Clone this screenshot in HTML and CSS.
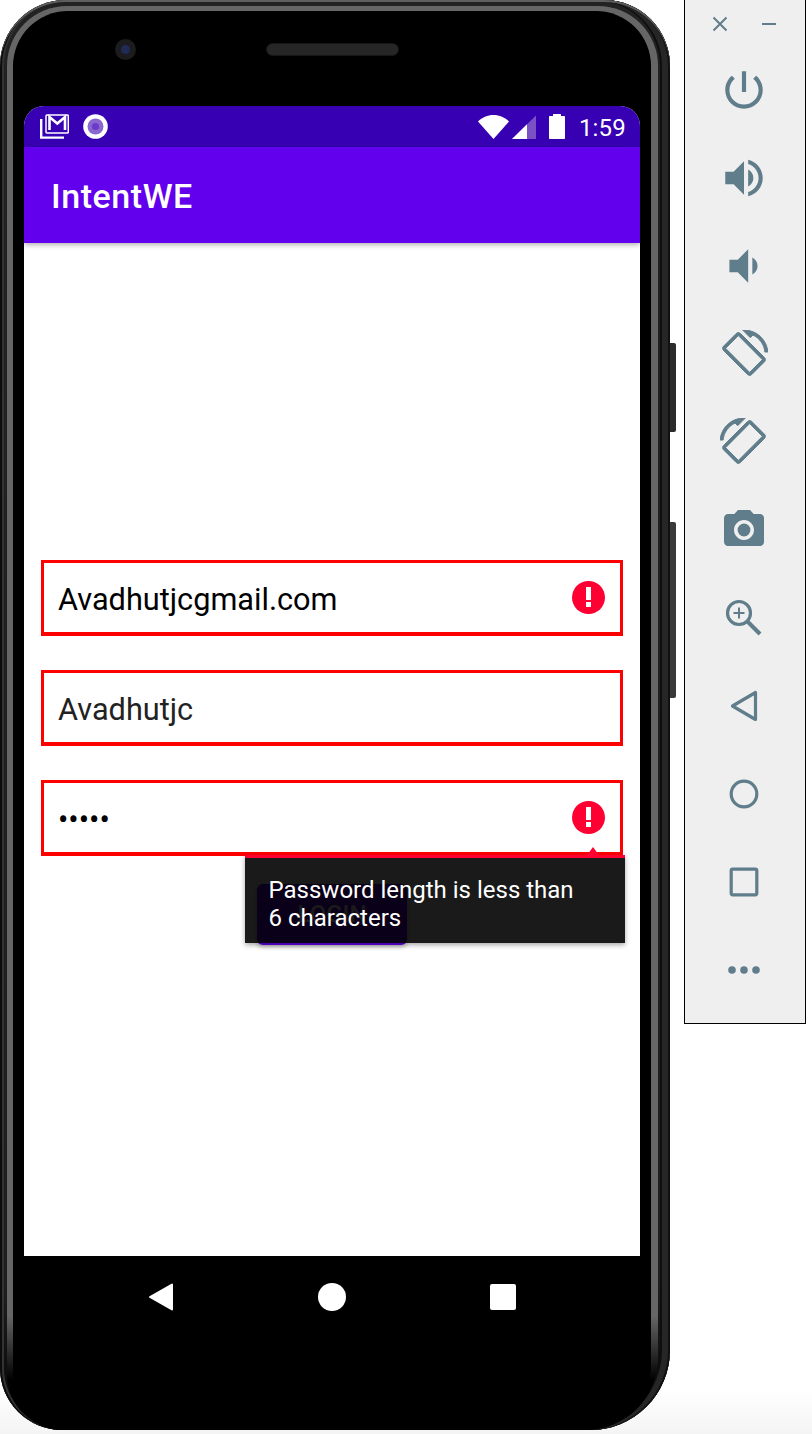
FILE: index.html
```html
<!DOCTYPE html>
<html lang="en">
<head>
<meta charset="utf-8">
<title>IntentWE</title>
<link rel="stylesheet" href="styles.css">
</head>
<body>
<div class="page">
  <div class="phone">
    <div class="side-btn side-btn-power"></div>
    <div class="side-btn side-btn-volume"></div>
    <div class="bezel">
      <div class="body">
        <div class="sensors">
          <div class="camera"><div class="lens"></div></div>
          <div class="speaker"></div>
        </div>
        <div class="screen">
          <div class="statusbar">
            <div class="status-left">
              <svg class="ic-mail" viewBox="0 0 29 25"><path class="mail-back" d="M1.2 5v18.6H24"/><rect class="mail-front" x="6" y="1" width="22.3" height="18" rx="1"/><path class="mail-m" d="M9.5 16V3l7.8 6.5L25 3v13"/></svg>
              <svg class="ic-radio" viewBox="0 0 25 25"><circle class="radio-ring" cx="12.5" cy="12.5" r="12.3"/><circle class="radio-in" cx="12.5" cy="12.5" r="8"/><circle class="radio-core" cx="12.5" cy="12.5" r="3.6"/></svg>
            </div>
            <div class="status-right">
              <svg class="ic-wifi" viewBox="0 0 31 24"><path class="white" d="M0 6.5C4 2.400 9.500 0 15.500 0S27 2.400 31 6.500L15.500 24z"/></svg>
              <svg class="ic-signal" viewBox="0 0 24 24"><path class="faded" d="M24 0.500V24H0z"/><path class="white" d="M15 9.300V24H0z"/></svg>
              <svg class="ic-battery" viewBox="0 0 16 25"><path class="white" d="M4 2V0.500C4 .2 4.200 0 4.500 0h7c.3 0 .5.200.5.500V2h3c.6 0 1 .4 1 1v21c0 .6-.4 1-1 1H1c-.6 0-1-.4-1-1V3c0-.6.400-1 1-1z"/></svg>
              <span class="clock">1:59</span>
            </div>
          </div>
          <div class="appbar">IntentWE</div>
          <div class="content">
            <div class="field">
              <span class="value">Avadhutjcgmail.com</span>
              <svg class="ic-error" viewBox="0 0 33 33"><circle class="err-disc" cx="16.500" cy="16.500" r="16.500"/><rect class="white" x="14" y="6" width="5" height="13"/><rect class="white" x="14" y="21" width="5" height="5"/></svg>
            </div>
            <div class="field">
              <span class="value value-soft">Avadhutjc</span>
            </div>
            <div class="field">
              <span class="value value-dots">•••••</span>
              <svg class="ic-error" viewBox="0 0 33 33"><circle class="err-disc" cx="16.500" cy="16.500" r="16.500"/><rect class="white" x="14" y="6" width="5" height="13"/><rect class="white" x="14" y="21" width="5" height="5"/></svg>
              <div class="tooltip">Password length is less than<br>6 characters</div>
            </div>
            <div class="login">LOGIN</div>
          </div>
          <div class="navbar">
            <svg class="ic-nav" viewBox="0 0 28 28"><path class="white stroke-join" d="M3 14L25 1.500v25z"/></svg>
            <svg class="ic-nav" viewBox="0 0 28 28"><circle class="white" cx="14" cy="14" r="14"/></svg>
            <svg class="ic-nav" viewBox="0 0 28 28"><rect class="white" x="1" y="1" width="26" height="26" rx="2"/></svg>
          </div>
        </div>
      </div>
    </div>
  </div>

  <aside class="tools">
    <div class="tools-head">
      <svg class="ic-win" viewBox="0 0 16 16"><path class="line-thin" d="M1.500 1.500l13 13M14.500 1.500l-13 13"/></svg>
      <svg class="ic-win" viewBox="0 0 16 16"><path class="line-thin" d="M1 8h14"/></svg>
    </div>
    <div class="tool"><svg class="ic-tool" viewBox="0 0 24 24"><path d="M13 3h-2v10h2V3zm4.830 2.170l-1.420 1.420C17.990 7.860 19 9.810 19 12c0 3.870-3.130 7-7 7s-7-3.130-7-7c0-2.190 1.010-4.140 2.580-5.420L6.170 5.170C4.230 6.820 3 9.260 3 12c0 4.970 4.030 9 9 9s9-4.030 9-9c0-2.740-1.230-5.180-3.170-6.830z"/></svg></div>
    <div class="tool"><svg class="ic-tool" viewBox="0 0 24 24"><path d="M3 9v6h4l5 5V4L7 9H3zm13.500 3c0-1.770-1.020-3.290-2.500-4.030v8.050c1.480-.73 2.500-2.250 2.500-4.020zM14 3.230v2.060c2.890.86 5 3.540 5 6.710s-2.110 5.850-5 6.710v2.060c4.010-.91 7-4.490 7-8.770s-2.990-7.860-7-8.770z"/></svg></div>
    <div class="tool"><svg class="ic-tool" viewBox="0 0 24 24"><path d="M18.500 12c0-1.770-1.020-3.290-2.500-4.030v8.050c1.480-.73 2.500-2.250 2.500-4.020zM5 9v6h4l5 5V4L9 9H5z"/></svg></div>
    <div class="tool"><svg class="ic-tool ic-rotate" viewBox="0 0 24 24"><path d="M16.480 2.520c3.270 1.550 5.610 4.720 5.970 8.480h1.500C23.440 4.840 18.290 0 12 0l-.66.03 3.810 3.810 1.330-1.320zm-6.250-.77c-.59-.59-1.540-.59-2.120 0L1.750 8.110c-.59.59-.59 1.540 0 2.120l12.020 12.020c.59.59 1.540.59 2.120 0l6.360-6.360c.59-.59.59-1.540 0-2.120L10.230 1.750zm4.600 19.440L2.810 9.170l6.360-6.360 12.020 12.020-6.360 6.360z"/></svg></div>
    <div class="tool"><svg class="ic-tool ic-rotate ic-mirror" viewBox="0 0 24 24"><path d="M16.480 2.520c3.270 1.550 5.610 4.720 5.970 8.480h1.500C23.440 4.840 18.290 0 12 0l-.66.03 3.810 3.810 1.330-1.320zm-6.250-.77c-.59-.59-1.540-.59-2.120 0L1.750 8.110c-.59.59-.59 1.540 0 2.120l12.020 12.020c.59.59 1.540.59 2.120 0l6.360-6.360c.59-.59.59-1.540 0-2.120L10.230 1.750zm4.600 19.440L2.810 9.170l6.360-6.360 12.020 12.020-6.360 6.360z"/></svg></div>
    <div class="tool"><svg class="ic-tool ic-camera" viewBox="0 0 24 24"><circle cx="12" cy="12" r="3.200"/><path d="M9 2L7.170 4H4c-1.100 0-2 .9-2 2v12c0 1.100.9 2 2 2h16c1.100 0 2-.9 2-2V6c0-1.100-.9-2-2-2h-3.170L15 2H9zm3 15c-2.760 0-5-2.240-5-5s2.240-5 5-5 5 2.240 5 5-2.240 5-5 5z"/></svg></div>
    <div class="tool"><svg class="ic-tool" viewBox="0 0 50 50"><circle class="line" cx="20" cy="20" r="11.500"/><path class="line-fine" d="M20 14.500v11M14.500 20h11"/><path class="line-handle" d="M28.500 28.500L41 41"/></svg></div>
    <div class="tool"><svg class="ic-tool" viewBox="0 0 50 50"><path class="line line-round" d="M13.500 25L36.500 11.500v27z"/></svg></div>
    <div class="tool"><svg class="ic-tool" viewBox="0 0 50 50"><circle class="line" cx="25" cy="25" r="12.800"/></svg></div>
    <div class="tool"><svg class="ic-tool" viewBox="0 0 50 50"><rect class="line" x="12.200" y="12.200" width="25.600" height="25.600" rx="1.500"/></svg></div>
    <div class="tool"><svg class="ic-tool" viewBox="0 0 50 50"><circle cx="13" cy="25" r="3.800"/><circle cx="25" cy="25" r="3.800"/><circle cx="37" cy="25" r="3.800"/></svg></div>
  </aside>
</div>
</body>
</html>
```
FILE: styles.css
```css
* { box-sizing: border-box; }

html, body { margin: 0; padding: 0; }

body {
  width: 812px;
  height: 1434px;
  overflow: hidden;
  background: linear-gradient(to bottom, #ffffff 0, #ffffff 1390px, #f4f4f4 1434px);
  font-family: Roboto, "Liberation Sans", sans-serif;
}

.page {
  display: flex;
  align-items: flex-start;
}

/* Device frame */
.phone {
  position: relative;
  flex: none;
  width: 670px;
  height: 1430px;
  padding: 6px 12px 0 7px;
  border-radius: 66px 66px 80px 62px;
  background: linear-gradient(to bottom, #222222 0, #1e1e1e 90%, #0b0b0b 97%);
  box-shadow:
    inset 0 2px 0 #5f5f5f,
    inset 2px 0 0 #0c0c0c,
    inset 4px 0 0 #333333,
    inset -2px 0 0 #111111,
    inset -8px 0 0 #262626,
    inset -10px 0 0 #0e0e0e;
}

.side-btn {
  position: absolute;
  left: 100%;
  width: 6px;
  border-radius: 0 2px 2px 0;
  background: #2b2b2b;
}

.side-btn-power { top: 343px; height: 89px; }
.side-btn-volume { top: 522px; height: 176px; background: #3a3a3a; }

.bezel {
  height: 100%;
  padding: 5px 7px 0 6px;
  border-radius: 60px 60px 72px 56px;
  background: linear-gradient(to bottom, #666666 0, #666666 92%, #000000 96.500%);
}

.body {
  display: flex;
  flex-direction: column;
  height: 100%;
  padding: 0 11px;
  border-radius: 55px 55px 66px 50px;
  background: #000000;
}

.sensors {
  flex: none;
  display: flex;
  align-items: center;
  gap: 130px;
  height: 95px;
  padding: 0 0 18px 91px;
}

.camera {
  display: flex;
  align-items: center;
  justify-content: center;
  width: 21px;
  height: 21px;
  border-radius: 50%;
  background: #1c1c1e;
}

.lens {
  width: 9px;
  height: 9px;
  border-radius: 50%;
  background: #1f2a55;
}

.speaker {
  width: 133px;
  height: 13px;
  border-radius: 7px;
  background: #262626;
  border: 1px solid #161616;
}

/* Screen */
.screen {
  flex: none;
  width: 616px;
  height: 1232px;
  display: flex;
  flex-direction: column;
  border-radius: 20px 20px 0 0;
  overflow: hidden;
  background: #ffffff;
}

.statusbar {
  flex: none;
  display: flex;
  align-items: center;
  justify-content: space-between;
  height: 41px;
  padding: 0 14px 0 16px;
  background: #3700b3;
  color: #ffffff;
}

.status-left,
.status-right {
  display: flex;
  align-items: center;
}

.status-left { gap: 14px; }

.ic-mail { width: 29px; height: 25px; }
.ic-radio { width: 25px; height: 25px; }
.ic-wifi { width: 31px; height: 24px; }
.ic-signal { width: 24px; height: 24px; margin-left: 3px; }
.ic-battery { width: 16px; height: 25px; margin-left: 13px; }

.white { fill: #ffffff; }
.faded { fill: #7b52c6; }
.mail-back { fill: none; stroke: #ffffff; stroke-width: 2.400; }
.mail-front { fill: none; stroke: #ffffff; stroke-width: 1.500; }
.mail-m { fill: none; stroke: #ffffff; stroke-width: 2.600; }
.radio-ring { fill: #ffffff; }
.radio-in { fill: #8a68cf; }
.radio-core { fill: #6a3bc9; }

.clock {
  margin: 2px 0 0 14px;
  font-size: 24px;
  line-height: 28px;
  letter-spacing: 0.2px;
}

.appbar {
  flex: none;
  position: relative;
  display: flex;
  align-items: center;
  height: 96px;
  padding: 2px 0 0 27px;
  background: #6200ee;
  color: #ffffff;
  font-size: 34px;
  font-weight: 500;
  letter-spacing: 0.55px;
  box-shadow: 0 2px 5px rgba(0, 0, 0, 0.3);
}

/* Form */
.content {
  flex: none;
  display: flex;
  flex-direction: column;
  align-items: center;
  gap: 34px;
  height: 1013px;
  padding: 317px 17px 0;
}

.field {
  position: relative;
  flex: none;
  display: flex;
  align-items: center;
  justify-content: space-between;
  width: 582px;
  height: 76px;
  padding: 0 15px 0 14px;
  border: 3px solid #ff0000;
  border-bottom-width: 4px;
}

.value {
  margin-top: 4px;
  font-size: 30.700px;
  line-height: 36px;
  color: #000000;
}

.value-soft { color: #222222; }

.ic-error {
  flex: none;
  width: 33px;
  height: 33px;
}

.err-disc { fill: #ff0033; }

.tooltip {
  position: absolute;
  top: calc(100% + 3px);
  right: -5px;
  z-index: 2;
  width: 380px;
  height: 88px;
  padding: 18px 24px 0 23.500px;
  border-top: 3px solid #ff0033;
  background: rgba(0, 0, 0, 0.898);
  color: #ffffff;
  font-size: 24px;
  line-height: 28px;
  box-shadow: 0 2px 5px rgba(0, 0, 0, 0.35);
}

.tooltip::before {
  content: "";
  position: absolute;
  right: 24px;
  bottom: 100%;
  border-style: solid;
  border-width: 0 8px 11px;
  border-color: transparent transparent #ff0033;
}

.login {
  flex: none;
  width: 150px;
  height: 61px;
  margin-top: -6px;
  border-radius: 6px;
  background: #6200ee;
  color: #ffffff;
  font-size: 24px;
  font-weight: 500;
  line-height: 61px;
  text-align: center;
  box-shadow: 0 2px 4px rgba(0, 0, 0, 0.3);
}

/* Navigation */
.navbar {
  flex: none;
  display: grid;
  grid-template-columns: repeat(3, 171px);
  justify-content: center;
  justify-items: center;
  align-items: center;
  height: 82px;
  background: #000000;
}

.ic-nav { width: 28px; height: 28px; }
.stroke-join { stroke: #ffffff; stroke-width: 2; stroke-linejoin: round; }

/* Emulator side panel */
.tools {
  flex: none;
  width: 122px;
  height: 1024px;
  margin-left: 14px;
  padding-right: 2px;
  border: 1px solid #000000;
  border-top: 0;
  background: #efefef;
}

.tools-head {
  display: flex;
  justify-content: space-between;
  align-items: center;
  height: 46px;
  padding: 2px 26px 0 27px;
}

.ic-win { width: 16px; height: 16px; }

.line-thin {
  fill: none;
  stroke: #607d8b;
  stroke-width: 2;
}

.tool {
  display: flex;
  align-items: center;
  justify-content: center;
  height: 88px;
}

.ic-tool {
  width: 50px;
  height: 50px;
  fill: #607d8b;
}

.ic-camera { width: 48px; height: 48px; }
.ic-mirror { transform: scaleX(-1); }

.ic-rotate {
  width: 48px;
  height: 48px;
  stroke: #607d8b;
  stroke-width: 0.500;
}

.line {
  fill: none;
  stroke: #607d8b;
  stroke-width: 3.200;
}

.line-round { stroke-linejoin: round; }

.line-fine {
  fill: none;
  stroke: #607d8b;
  stroke-width: 2;
}

.line-handle {
  fill: none;
  stroke: #607d8b;
  stroke-width: 4;
}
```
